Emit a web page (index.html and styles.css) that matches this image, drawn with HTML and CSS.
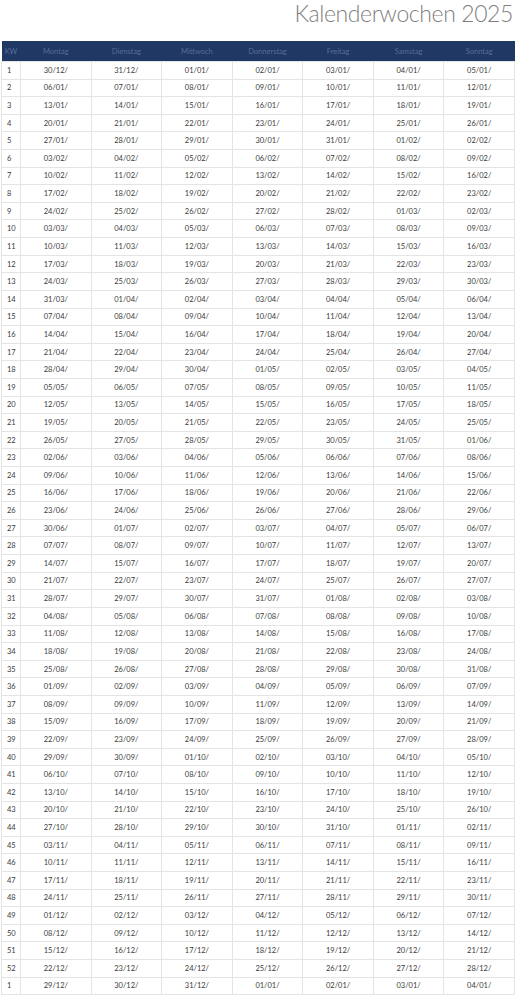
FILE: index.html
```html
<!DOCTYPE html>
<html lang="de">
<head>
<meta charset="utf-8">
<title>Kalenderwochen 2025</title>
<link rel="stylesheet" href="styles.css">
</head>
<body>
<div class="page">
<h1 class="title">Kalenderwochen 2025</h1>
<table class="cal">
<colgroup><col class="c-kw"><col><col><col><col><col><col><col></colgroup>
<thead>
<tr><th>KW</th><th>Montag</th><th>Dienstag</th><th>Mittwoch</th><th>Donnerstag</th><th>Freitag</th><th>Samstag</th><th>Sonntag</th></tr>
</thead>
<tbody>
<tr><td>1</td><td>30/12/</td><td>31/12/</td><td>01/01/</td><td>02/01/</td><td>03/01/</td><td>04/01/</td><td>05/01/</td></tr>
<tr><td>2</td><td>06/01/</td><td>07/01/</td><td>08/01/</td><td>09/01/</td><td>10/01/</td><td>11/01/</td><td>12/01/</td></tr>
<tr><td>3</td><td>13/01/</td><td>14/01/</td><td>15/01/</td><td>16/01/</td><td>17/01/</td><td>18/01/</td><td>19/01/</td></tr>
<tr><td>4</td><td>20/01/</td><td>21/01/</td><td>22/01/</td><td>23/01/</td><td>24/01/</td><td>25/01/</td><td>26/01/</td></tr>
<tr><td>5</td><td>27/01/</td><td>28/01/</td><td>29/01/</td><td>30/01/</td><td>31/01/</td><td>01/02/</td><td>02/02/</td></tr>
<tr><td>6</td><td>03/02/</td><td>04/02/</td><td>05/02/</td><td>06/02/</td><td>07/02/</td><td>08/02/</td><td>09/02/</td></tr>
<tr><td>7</td><td>10/02/</td><td>11/02/</td><td>12/02/</td><td>13/02/</td><td>14/02/</td><td>15/02/</td><td>16/02/</td></tr>
<tr><td>8</td><td>17/02/</td><td>18/02/</td><td>19/02/</td><td>20/02/</td><td>21/02/</td><td>22/02/</td><td>23/02/</td></tr>
<tr><td>9</td><td>24/02/</td><td>25/02/</td><td>26/02/</td><td>27/02/</td><td>28/02/</td><td>01/03/</td><td>02/03/</td></tr>
<tr><td>10</td><td>03/03/</td><td>04/03/</td><td>05/03/</td><td>06/03/</td><td>07/03/</td><td>08/03/</td><td>09/03/</td></tr>
<tr><td>11</td><td>10/03/</td><td>11/03/</td><td>12/03/</td><td>13/03/</td><td>14/03/</td><td>15/03/</td><td>16/03/</td></tr>
<tr><td>12</td><td>17/03/</td><td>18/03/</td><td>19/03/</td><td>20/03/</td><td>21/03/</td><td>22/03/</td><td>23/03/</td></tr>
<tr><td>13</td><td>24/03/</td><td>25/03/</td><td>26/03/</td><td>27/03/</td><td>28/03/</td><td>29/03/</td><td>30/03/</td></tr>
<tr><td>14</td><td>31/03/</td><td>01/04/</td><td>02/04/</td><td>03/04/</td><td>04/04/</td><td>05/04/</td><td>06/04/</td></tr>
<tr><td>15</td><td>07/04/</td><td>08/04/</td><td>09/04/</td><td>10/04/</td><td>11/04/</td><td>12/04/</td><td>13/04/</td></tr>
<tr><td>16</td><td>14/04/</td><td>15/04/</td><td>16/04/</td><td>17/04/</td><td>18/04/</td><td>19/04/</td><td>20/04/</td></tr>
<tr><td>17</td><td>21/04/</td><td>22/04/</td><td>23/04/</td><td>24/04/</td><td>25/04/</td><td>26/04/</td><td>27/04/</td></tr>
<tr><td>18</td><td>28/04/</td><td>29/04/</td><td>30/04/</td><td>01/05/</td><td>02/05/</td><td>03/05/</td><td>04/05/</td></tr>
<tr><td>19</td><td>05/05/</td><td>06/05/</td><td>07/05/</td><td>08/05/</td><td>09/05/</td><td>10/05/</td><td>11/05/</td></tr>
<tr><td>20</td><td>12/05/</td><td>13/05/</td><td>14/05/</td><td>15/05/</td><td>16/05/</td><td>17/05/</td><td>18/05/</td></tr>
<tr><td>21</td><td>19/05/</td><td>20/05/</td><td>21/05/</td><td>22/05/</td><td>23/05/</td><td>24/05/</td><td>25/05/</td></tr>
<tr><td>22</td><td>26/05/</td><td>27/05/</td><td>28/05/</td><td>29/05/</td><td>30/05/</td><td>31/05/</td><td>01/06/</td></tr>
<tr><td>23</td><td>02/06/</td><td>03/06/</td><td>04/06/</td><td>05/06/</td><td>06/06/</td><td>07/06/</td><td>08/06/</td></tr>
<tr><td>24</td><td>09/06/</td><td>10/06/</td><td>11/06/</td><td>12/06/</td><td>13/06/</td><td>14/06/</td><td>15/06/</td></tr>
<tr><td>25</td><td>16/06/</td><td>17/06/</td><td>18/06/</td><td>19/06/</td><td>20/06/</td><td>21/06/</td><td>22/06/</td></tr>
<tr><td>26</td><td>23/06/</td><td>24/06/</td><td>25/06/</td><td>26/06/</td><td>27/06/</td><td>28/06/</td><td>29/06/</td></tr>
<tr><td>27</td><td>30/06/</td><td>01/07/</td><td>02/07/</td><td>03/07/</td><td>04/07/</td><td>05/07/</td><td>06/07/</td></tr>
<tr><td>28</td><td>07/07/</td><td>08/07/</td><td>09/07/</td><td>10/07/</td><td>11/07/</td><td>12/07/</td><td>13/07/</td></tr>
<tr><td>29</td><td>14/07/</td><td>15/07/</td><td>16/07/</td><td>17/07/</td><td>18/07/</td><td>19/07/</td><td>20/07/</td></tr>
<tr><td>30</td><td>21/07/</td><td>22/07/</td><td>23/07/</td><td>24/07/</td><td>25/07/</td><td>26/07/</td><td>27/07/</td></tr>
<tr><td>31</td><td>28/07/</td><td>29/07/</td><td>30/07/</td><td>31/07/</td><td>01/08/</td><td>02/08/</td><td>03/08/</td></tr>
<tr><td>32</td><td>04/08/</td><td>05/08/</td><td>06/08/</td><td>07/08/</td><td>08/08/</td><td>09/08/</td><td>10/08/</td></tr>
<tr><td>33</td><td>11/08/</td><td>12/08/</td><td>13/08/</td><td>14/08/</td><td>15/08/</td><td>16/08/</td><td>17/08/</td></tr>
<tr><td>34</td><td>18/08/</td><td>19/08/</td><td>20/08/</td><td>21/08/</td><td>22/08/</td><td>23/08/</td><td>24/08/</td></tr>
<tr><td>35</td><td>25/08/</td><td>26/08/</td><td>27/08/</td><td>28/08/</td><td>29/08/</td><td>30/08/</td><td>31/08/</td></tr>
<tr><td>36</td><td>01/09/</td><td>02/09/</td><td>03/09/</td><td>04/09/</td><td>05/09/</td><td>06/09/</td><td>07/09/</td></tr>
<tr><td>37</td><td>08/09/</td><td>09/09/</td><td>10/09/</td><td>11/09/</td><td>12/09/</td><td>13/09/</td><td>14/09/</td></tr>
<tr><td>38</td><td>15/09/</td><td>16/09/</td><td>17/09/</td><td>18/09/</td><td>19/09/</td><td>20/09/</td><td>21/09/</td></tr>
<tr><td>39</td><td>22/09/</td><td>23/09/</td><td>24/09/</td><td>25/09/</td><td>26/09/</td><td>27/09/</td><td>28/09/</td></tr>
<tr><td>40</td><td>29/09/</td><td>30/09/</td><td>01/10/</td><td>02/10/</td><td>03/10/</td><td>04/10/</td><td>05/10/</td></tr>
<tr><td>41</td><td>06/10/</td><td>07/10/</td><td>08/10/</td><td>09/10/</td><td>10/10/</td><td>11/10/</td><td>12/10/</td></tr>
<tr><td>42</td><td>13/10/</td><td>14/10/</td><td>15/10/</td><td>16/10/</td><td>17/10/</td><td>18/10/</td><td>19/10/</td></tr>
<tr><td>43</td><td>20/10/</td><td>21/10/</td><td>22/10/</td><td>23/10/</td><td>24/10/</td><td>25/10/</td><td>26/10/</td></tr>
<tr><td>44</td><td>27/10/</td><td>28/10/</td><td>29/10/</td><td>30/10/</td><td>31/10/</td><td>01/11/</td><td>02/11/</td></tr>
<tr><td>45</td><td>03/11/</td><td>04/11/</td><td>05/11/</td><td>06/11/</td><td>07/11/</td><td>08/11/</td><td>09/11/</td></tr>
<tr><td>46</td><td>10/11/</td><td>11/11/</td><td>12/11/</td><td>13/11/</td><td>14/11/</td><td>15/11/</td><td>16/11/</td></tr>
<tr><td>47</td><td>17/11/</td><td>18/11/</td><td>19/11/</td><td>20/11/</td><td>21/11/</td><td>22/11/</td><td>23/11/</td></tr>
<tr><td>48</td><td>24/11/</td><td>25/11/</td><td>26/11/</td><td>27/11/</td><td>28/11/</td><td>29/11/</td><td>30/11/</td></tr>
<tr><td>49</td><td>01/12/</td><td>02/12/</td><td>03/12/</td><td>04/12/</td><td>05/12/</td><td>06/12/</td><td>07/12/</td></tr>
<tr><td>50</td><td>08/12/</td><td>09/12/</td><td>10/12/</td><td>11/12/</td><td>12/12/</td><td>13/12/</td><td>14/12/</td></tr>
<tr><td>51</td><td>15/12/</td><td>16/12/</td><td>17/12/</td><td>18/12/</td><td>19/12/</td><td>20/12/</td><td>21/12/</td></tr>
<tr><td>52</td><td>22/12/</td><td>23/12/</td><td>24/12/</td><td>25/12/</td><td>26/12/</td><td>27/12/</td><td>28/12/</td></tr>
<tr><td>1</td><td>29/12/</td><td>30/12/</td><td>31/12/</td><td>01/01/</td><td>02/01/</td><td>03/01/</td><td>04/01/</td></tr>
</tbody>
</table>
</div>
</body>
</html>
```

FILE: styles.css
```css
html, body {
  margin: 0;
  padding: 0;
  background: #ffffff;
}

.page {
  width: 516px;
  font-family: Lato, "Liberation Sans", sans-serif;
}

.title {
  margin: 0 3px 14px 0;
  font-size: 23px;
  line-height: 27px;
  font-weight: 300;
  letter-spacing: -0.4px;
  color: #7f7f7f;
  text-align: right;
}

.cal {
  margin-left: 1px;
  width: 514px;
  table-layout: fixed;
  border-collapse: collapse;
  font-size: 7.5px;
  color: #3a3a3a;
}

.c-kw {
  width: 19px;
}

.cal th {
  height: 20px;
  padding: 0;
  background: #1f3864;
  color: #5a6d98;
  font-weight: 400;
  text-align: center;
  vertical-align: middle;
  border: none;
}

.cal td {
  height: 17.615px;
  padding: 0;
  box-sizing: border-box;
  border: 1px solid #e4e4e4;
  text-align: center;
  vertical-align: middle;
}

.cal td:first-child {
  text-align: left;
  padding-left: 5px;
}
```
